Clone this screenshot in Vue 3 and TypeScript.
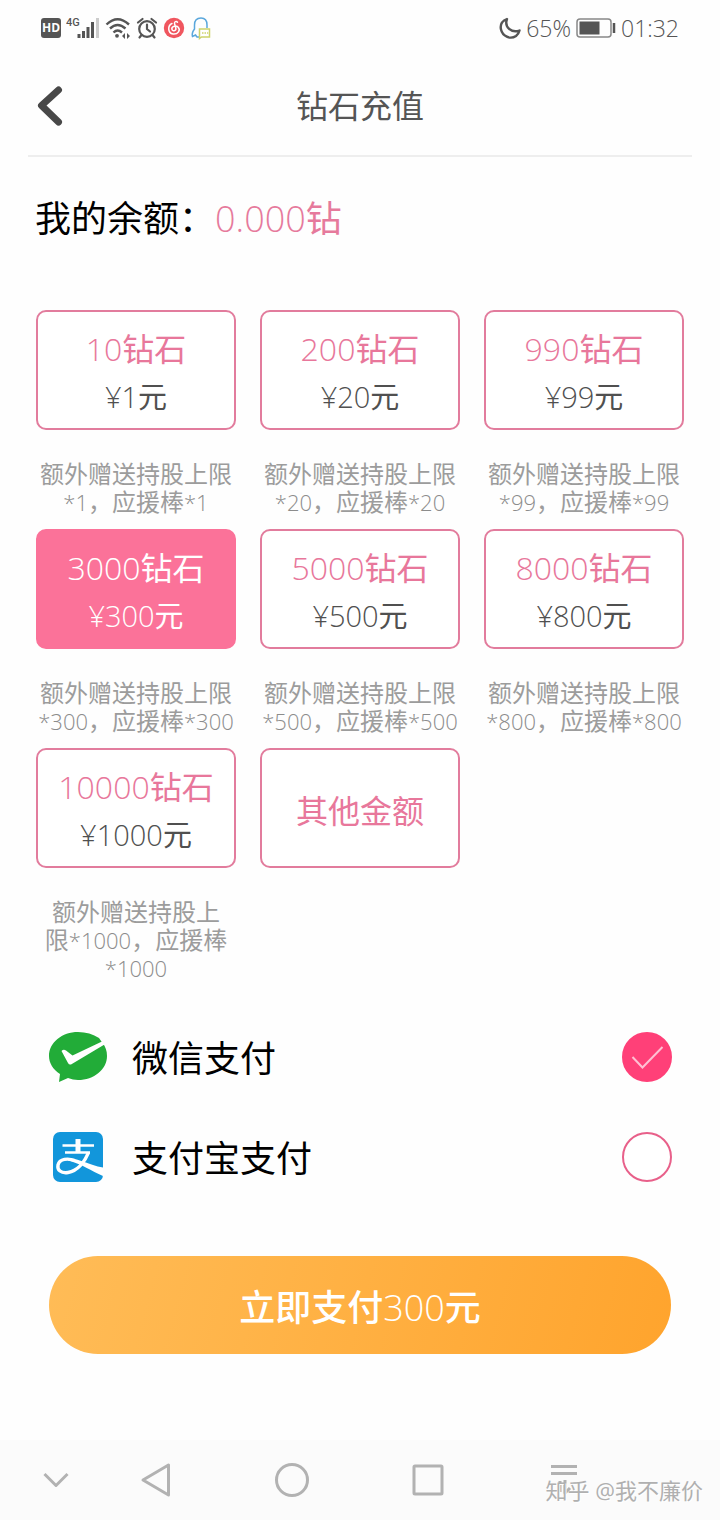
<script setup lang="ts">
import { computed, h, ref } from 'vue'
import type { FunctionalComponent } from 'vue'

interface Pack {
  id: string
  label: string
  price?: number
  hint?: string
}

const packs: Pack[] = [
  { id: 'p1', label: '10钻石', price: 1, hint: '额外赠送持股上限\n*1，应援棒*1' },
  { id: 'p20', label: '200钻石', price: 20, hint: '额外赠送持股上限\n*20，应援棒*20' },
  { id: 'p99', label: '990钻石', price: 99, hint: '额外赠送持股上限\n*99，应援棒*99' },
  { id: 'p300', label: '3000钻石', price: 300, hint: '额外赠送持股上限\n*300，应援棒*300' },
  { id: 'p500', label: '5000钻石', price: 500, hint: '额外赠送持股上限\n*500，应援棒*500' },
  { id: 'p800', label: '8000钻石', price: 800, hint: '额外赠送持股上限\n*800，应援棒*800' },
  { id: 'p1000', label: '10000钻石', price: 1000, hint: '额外赠送持股上\n限*1000，应援棒\n*1000' },
  { id: 'other', label: '其他金额' },
]

const selected = ref('p300')
const method = ref<'wechat' | 'alipay'>('wechat')
const amount = computed(() => packs.find((p) => p.id === selected.value)?.price ?? 0)

// Sets runs of digits and symbols in a lighter weight than the Chinese text around them.
const MixedText: FunctionalComponent<{ text: string }> = (props) =>
  h(
    'span',
    props.text
      .split(/([\d*.¥]+)/)
      .filter(Boolean)
      .map((run) => (/^[\d*.¥]/.test(run) ? h('span', { class: 'num' }, run) : run)),
  )
MixedText.props = ['text']
</script>

<template>
  <div class="page">
    <div class="status">
      <div class="status-group">
        <span class="hd">HD</span>
        <svg width="34" height="26" viewBox="0 0 34 26" aria-hidden="true">
          <text x="0" y="11" class="net">4G</text>
          <path d="M13 19v4M17.500 16v7M22 12v11M26.500 7v16" stroke="#555" stroke-width="3" fill="none" />
          <path d="M31.500 3v20" stroke="#ccc" stroke-width="3" />
        </svg>
        <svg width="26" height="26" viewBox="0 0 26 26" aria-hidden="true">
          <g fill="none" stroke="#555" stroke-width="2.400">
            <path d="M1.500 9.500Q12.500 -1 24 9.500" />
            <path d="M5 13.500Q12.500 6.500 20.500 13.500" />
            <path d="M8.500 17.500Q12.500 13.500 17 17.500" />
          </g>
          <circle cx="12" cy="20.800" r="1.900" fill="#555" />
          <path d="M20 18v6l-3-3zM22 18v6l3-3z" fill="#555" />
        </svg>
        <svg width="22" height="26" viewBox="0 0 22 26" aria-hidden="true">
          <g fill="none" stroke="#555" stroke-width="2.200" stroke-linecap="round">
            <circle cx="11" cy="14" r="7.800" />
            <path d="M2 7.500L6.500 4M20 7.500L15.500 4M11 9.500V14l3 2.500M5.500 20l-2 2.500M16.500 20l2 2.500" />
          </g>
        </svg>
        <svg width="22" height="26" viewBox="0 0 22 26" aria-hidden="true">
          <circle cx="11" cy="13" r="10.200" fill="#f0565f" />
          <g fill="none" stroke="#fff" stroke-width="1.500" stroke-linecap="round">
            <path d="M9 8.500C4.500 10.500 4.500 18 10 19C15 19.500 18 15 15 12C12.500 9.500 8 12 9 14.500C10 17 13.500 15.500 12.800 13L11.500 8.500C11.200 6.500 13.500 6 14.500 7.200" />
          </g>
        </svg>
        <svg width="22" height="26" viewBox="0 0 22 26" aria-hidden="true">
          <path d="M10 22H7L5.500 20L2.500 21.500Q1.500 18 4.500 14V10Q4.500 3 11 3Q17 3 17 10V13" fill="none" stroke="#5aa7dc" stroke-width="1.500" />
          <path d="M9.500 14h10v8h-8l-2 1.500z" fill="#fff" stroke="#cdd36b" stroke-width="1.500" />
          <path d="M12 18h1.500M14.500 18H16M17 18h1.200" stroke="#cdd36b" stroke-width="1.500" />
        </svg>
      </div>
      <div class="status-group">
        <svg width="22" height="26" viewBox="0 0 22 26" aria-hidden="true">
          <path d="M8 4C3 6 1 10 2 14.500C3.500 21 11 25 17 21C19 19.500 20 17.500 20.500 15.500C12.500 18.500 5 12 8 4Z" fill="none" stroke="#555" stroke-width="2.400" stroke-linejoin="round" />
        </svg>
        <span>65%</span>
        <svg width="40" height="26" viewBox="0 0 40 26" aria-hidden="true">
          <rect x="1" y="4" width="34" height="18" rx="3" fill="none" stroke="#888" stroke-width="1.500" />
          <rect x="3.500" y="6.500" width="20" height="13" fill="#555" />
          <path d="M38 8v10" stroke="#555" stroke-width="2.500" />
        </svg>
        <span>01:32</span>
      </div>
    </div>

    <header class="header">
      <button class="back" type="button" aria-label="返回">
        <svg width="26" height="40" viewBox="0 0 26 40" aria-hidden="true">
          <path d="M21.500 4L4.500 19.500L21.500 36" fill="none" stroke="#484848" stroke-width="7" stroke-linecap="round" stroke-linejoin="round" />
        </svg>
      </button>
      <h1>钻石充值</h1>
    </header>

    <main>
      <p class="balance"><span>我的余额：</span><MixedText class="value" text="0.000钻" /></p>

      <div class="packs">
        <div v-for="pack in packs" :key="pack.id" class="pack">
          <button
            type="button"
            class="card"
            :class="{ active: pack.id === selected, single: !pack.price }"
            :aria-pressed="pack.id === selected"
            @click="selected = pack.id"
          >
            <MixedText class="name" :text="pack.label" />
            <MixedText v-if="pack.price" class="price" :text="`¥${pack.price}元`" />
          </button>
          <p v-if="pack.hint" class="hint"><MixedText :text="pack.hint" /></p>
        </div>
      </div>

      <div class="methods">
        <label class="method" for="pay-wechat">
          <svg width="58" height="50" viewBox="0 0 58 50" aria-hidden="true">
            <path d="M29 0C13 0 0 10.500 0 24C0 31 4 37.500 11 42L10 50L19 46Q24 48 29 48C45 48 58 37.500 58 24C58 19 56.500 14.500 53.500 11L50 6Q41 0 29 0Z" fill="#22ac38" />
            <path d="M12.500 19Q14.500 17 17 18.500L23.500 23.500L53 9.500Q54.500 10 55.500 12.500L22 32.500Q20 33 19 31Z" fill="#fff" />
          </svg>
          <span class="method-name">微信支付</span>
          <input id="pay-wechat" v-model="method" type="radio" name="method" value="wechat" />
          <svg class="mark" width="50" height="50" viewBox="0 0 50 50" aria-hidden="true">
            <circle class="ring" cx="25" cy="25" r="24" />
            <path class="tick" d="M10.500 25L20.500 35.500L40.500 15" />
          </svg>
        </label>
        <label class="method" for="pay-alipay">
          <svg width="58" height="50" viewBox="0 0 58 50" aria-hidden="true">
            <rect x="4" width="50" height="50" rx="7" fill="#1296db" />
            <g fill="none" stroke="#fff">
              <path d="M13.500 13.500H45M16 20.500H41" stroke-width="2.400" />
              <path d="M29 7V20" stroke-width="5" />
              <path d="M39.500 20.500C36 29 29 39 19 40.500C12 41.500 8 38 9 33C10.500 26.500 19 26 26 28.500" stroke-width="3.400" />
            </g>
            <path d="M19 26.500C30 26 39 33 54 35.500V44C42 39 33 32 19 28.500Z" fill="#fff" />
          </svg>
          <span class="method-name">支付宝支付</span>
          <input id="pay-alipay" v-model="method" type="radio" name="method" value="alipay" />
          <svg class="mark" width="50" height="50" viewBox="0 0 50 50" aria-hidden="true">
            <circle class="ring" cx="25" cy="25" r="24" />
            <path class="tick" d="M10.500 25L20.500 35.500L40.500 15" />
          </svg>
        </label>
      </div>

      <button class="pay" type="button"><MixedText :text="`立即支付${amount}元`" /></button>
    </main>

    <nav class="nav">
      <button type="button" aria-label="收起">
        <svg width="32" height="36" viewBox="0 0 32 36" aria-hidden="true"><path d="M4.500 12L16 23.500L27.500 12" /></svg>
      </button>
      <button type="button" aria-label="后退">
        <svg width="32" height="36" viewBox="0 0 32 36" aria-hidden="true"><path d="M28.500 3V33L3 18Z" /></svg>
      </button>
      <button type="button" aria-label="主页">
        <svg width="36" height="36" viewBox="0 0 36 36" aria-hidden="true"><circle cx="18" cy="18" r="15.500" /></svg>
      </button>
      <button type="button" aria-label="最近">
        <svg width="36" height="36" viewBox="0 0 36 36" aria-hidden="true"><rect x="4" y="4" width="28" height="28" rx="1" /></svg>
      </button>
      <button type="button" aria-label="菜单">
        <svg width="36" height="36" viewBox="0 0 36 36" aria-hidden="true"><path d="M5 4.500H31M5 11.500H31M14 19V30M19 18V31L24 26" /></svg>
      </button>
      <span class="credit">知乎 @我不廉价</span>
    </nav>
  </div>
</template>

<style>
body {
  margin: 0;
  background: #fff;
}

.num {
  font-weight: 300;
}
</style>

<style scoped>
.page {
  min-height: 100vh;
  display: flex;
  flex-direction: column;
  background: #fefefe;
  font-family: "Open Sans", "Noto Sans CJK SC", sans-serif;
  font-weight: 400;
  color: #000;
}

button {
  margin: 0;
  padding: 0;
  border: 0;
  background: none;
  font: inherit;
  color: inherit;
  cursor: pointer;
}

h1,
p {
  margin: 0;
  font-weight: inherit;
}

svg {
  display: block;
  flex: none;
}

.status {
  height: 56px;
  display: flex;
  align-items: center;
  justify-content: space-between;
  padding: 0 41px;
  font-size: 23px;
  font-weight: 300;
  color: #555;
}

.status-group {
  display: flex;
  align-items: center;
  gap: 5px;
}

.hd {
  width: 20px;
  height: 20px;
  border-radius: 3px;
  background: #555;
  color: #fff;
  font-size: 12px;
  font-weight: 700;
  line-height: 20px;
  text-align: center;
}

.net {
  font-family: Roboto, sans-serif;
  font-size: 11px;
  font-weight: 500;
  fill: #555;
}

.header {
  height: 99px;
  margin: 0 28px;
  display: grid;
  grid-template-columns: 40px 1fr 40px;
  align-items: center;
  border-bottom: 2px solid #eee;
}

.back {
  padding-left: 9px;
}

h1 {
  font-size: 32px;
  line-height: 48px;
  text-align: center;
  color: #555;
}

.balance {
  display: flex;
  padding: 34px 35px 0;
  font-size: 36px;
  line-height: 56px;
}

.balance .value {
  color: #e67a9c;
}

.packs {
  display: grid;
  grid-template-columns: repeat(3, minmax(0, 1fr));
  gap: 13px 24px;
  padding: 63px 36px 0;
}

.card {
  width: 100%;
  height: 120px;
  padding-top: 5px;
  display: flex;
  flex-direction: column;
  align-items: center;
  justify-content: center;
  border: 2px solid #e27c9d;
  border-radius: 10px;
  background: #fff;
}

.name {
  font-size: 32px;
  line-height: 48px;
  color: #e8779b;
}

.price {
  font-size: 29px;
  line-height: 48px;
  color: #505050;
}

.card.active {
  border-color: #fb7299;
  background: #fb7299;
}

.card.active .name,
.card.active .price {
  color: #fff;
}

.hint {
  margin-top: 30px;
  font-size: 24px;
  line-height: 28px;
  text-align: center;
  white-space: pre;
  color: #9c9c9c;
}

.hint :deep(.num) {
  font-size: 22px;
  color: #8c8c8c;
}

.methods {
  padding: 25px 48px 0 49px;
}

.method {
  height: 100px;
  display: flex;
  align-items: center;
  cursor: pointer;
}

.method-name {
  flex: 1;
  margin-left: 25px;
  padding-top: 4px;
  font-size: 36px;
  line-height: 56px;
}

.method input {
  width: 1px;
  height: 1px;
  margin: 0;
  opacity: 0;
}

.ring {
  fill: #fff;
  stroke: #e8608a;
  stroke-width: 2;
}

.tick {
  display: none;
  fill: none;
  stroke: #ffc0d3;
  stroke-width: 2;
}

input:checked + .mark .ring {
  fill: #ff4078;
  stroke: #ff4078;
}

input:checked + .mark .tick {
  display: block;
}

.pay {
  display: block;
  width: calc(100% - 98px);
  height: 98px;
  margin: 49px 49px 0;
  border-radius: 49px;
  background: linear-gradient(105deg, #ffbc57, #ffa42d);
  color: #fff;
  font-size: 36px;
  font-weight: 500;
}

.nav {
  position: relative;
  height: 80px;
  margin-top: auto;
  padding: 0 88px 0 24px;
  display: grid;
  grid-template-columns: 64fr 136fr 136fr 136fr 136fr;
  background: #fbfbfb;
}

.nav button {
  display: flex;
  align-items: center;
  justify-content: center;
}

.nav svg {
  fill: none;
  stroke: #b2b2b2;
  stroke-width: 3;
  stroke-linejoin: round;
}

.credit {
  position: absolute;
  right: 17px;
  bottom: 14px;
  font-size: 22px;
  line-height: 32px;
  color: #b0b0b0;
  text-shadow: 1px 1px 0 #fff;
}
</style>
